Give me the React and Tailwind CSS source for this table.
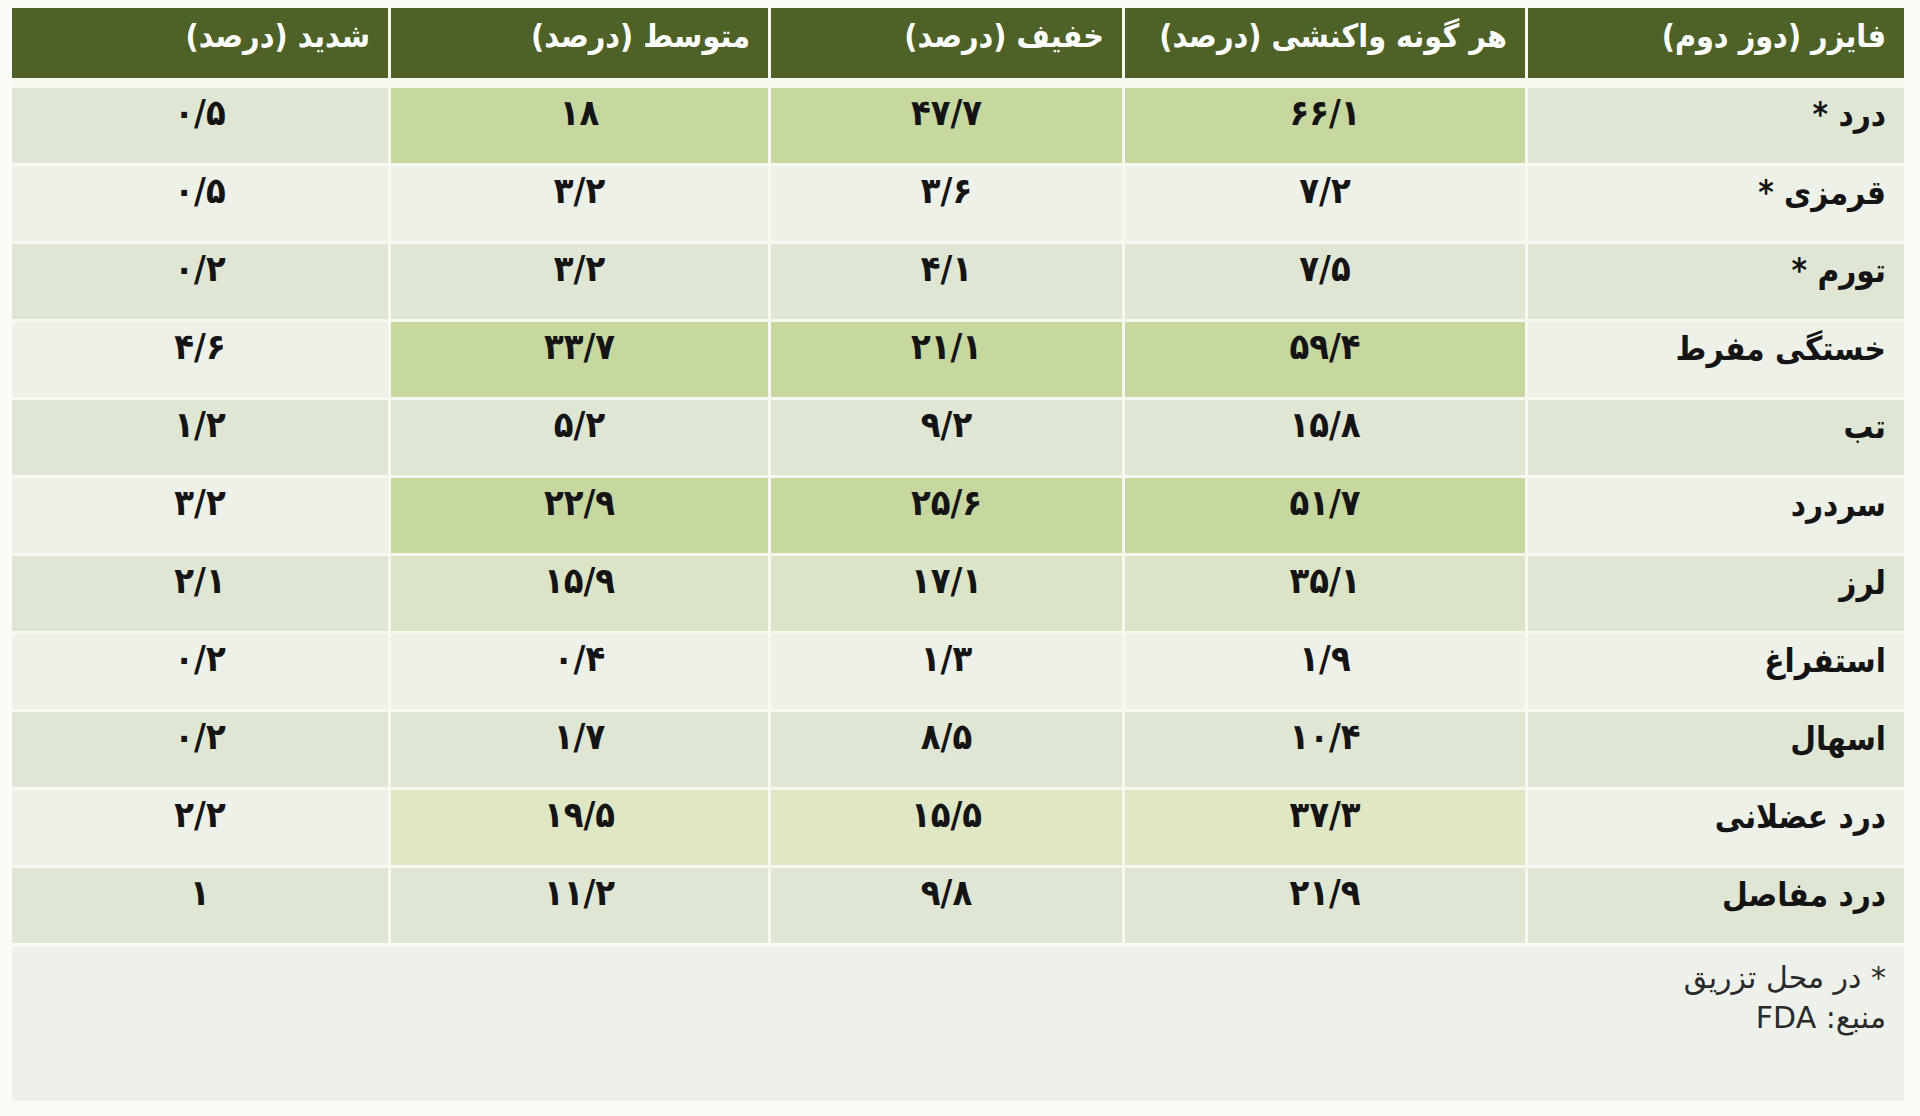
import React from "react";

const rows = [
  { label: "درد *", v: ["۶۶/۱", "۴۷/۷", "۱۸", "۰/۵"], odd: true, hl: "strong" },
  { label: "قرمزی *", v: ["۷/۲", "۳/۶", "۳/۲", "۰/۵"], odd: false },
  { label: "تورم *", v: ["۷/۵", "۴/۱", "۳/۲", "۰/۲"], odd: true },
  { label: "خستگی مفرط", v: ["۵۹/۴", "۲۱/۱", "۳۳/۷", "۴/۶"], odd: false, hl: "strong" },
  { label: "تب", v: ["۱۵/۸", "۹/۲", "۵/۲", "۱/۲"], odd: true },
  { label: "سردرد", v: ["۵۱/۷", "۲۵/۶", "۲۲/۹", "۳/۲"], odd: false, hl: "strong" },
  { label: "لرز", v: ["۳۵/۱", "۱۷/۱", "۱۵/۹", "۲/۱"], odd: true, hl: "faint" },
  { label: "استفراغ", v: ["۱/۹", "۱/۳", "۰/۴", "۰/۲"], odd: false },
  { label: "اسهال", v: ["۱۰/۴", "۸/۵", "۱/۷", "۰/۲"], odd: true },
  { label: "درد عضلانی", v: ["۳۷/۳", "۱۵/۵", "۱۹/۵", "۲/۲"], odd: false, hl: "light" },
  { label: "درد مفاصل", v: ["۲۱/۹", "۹/۸", "۱۱/۲", "۱"], odd: true },
];

const headers = [
  "فایزر (دوز دوم)",
  "هر گونه واکنشی (درصد)",
  "خفیف (درصد)",
  "متوسط (درصد)",
  "شدید (درصد)",
];

const grid =
  "grid grid-cols-[376px_400px_351px_377px_376px] gap-x-[3px]";

function baseBg(odd) {
  return odd ? "bg-[#dfe6d3]" : "bg-[#eef1e8]";
}

function midBg(row) {
  if (row.hl === "strong") return "bg-[#c6d7a0]";
  if (row.hl === "light") return "bg-[#dfe7c4]";
  if (row.hl === "faint") return "bg-[#dce4c8]";
  return baseBg(row.odd);
}

export default function App() {
  return (
    <div
      dir="rtl"
      className="w-[1920px] h-[1116px] bg-[#fafbf6] pt-[8px] px-[16px] text-[#141414]"
      style={{ fontFamily: '"DejaVu Sans Condensed", "DejaVu Sans", sans-serif' }}
    >
      <div className="flex flex-col w-[1892px]">
        {/* header */}
        <div className={`${grid} h-[70px] bg-[#f7f9f0]`}>
          {headers.map((h, i) => (
            <div
              key={i}
              className="bg-[#4e6126] text-white font-bold text-[32px] pr-[18px] pt-[6px] leading-[44px] text-right whitespace-nowrap"
            >
              {h}
            </div>
          ))}
        </div>
        <div className="h-[10px] bg-[#f7f9f0]" />
        {/* body */}
        <div className="flex flex-col gap-y-[3px] bg-[#f7f9f0]">
          {rows.map((r, ri) => (
            <div key={ri} className={`${grid} h-[75px]`}>
              <div
                className={`${baseBg(r.odd)} font-bold text-[33px] pr-[18px] pt-[4px] leading-[46px] text-right whitespace-nowrap`}
              >
                {r.label}
              </div>
              {r.v.map((v, vi) => (
                <div
                  key={vi}
                  className={`${vi === 3 ? baseBg(r.odd) : midBg(r)} font-bold text-[36px] pt-[2px] leading-[46px] text-center`}
                >
                  <span dir="ltr">{v}</span>
                </div>
              ))}
            </div>
          ))}
        </div>
        {/* footer */}
        <div className="mt-[3px] h-[155px] bg-[#eef1e9] pr-[18px] pt-[12px] text-right text-[30px] leading-[40px] text-[#2a2a2a]"
          style={{ fontFamily: '"DejaVu Sans", sans-serif' }}>
          <div>* در محل تزریق</div>
          <div>منبع: FDA</div>
        </div>
      </div>
    </div>
  );
}
